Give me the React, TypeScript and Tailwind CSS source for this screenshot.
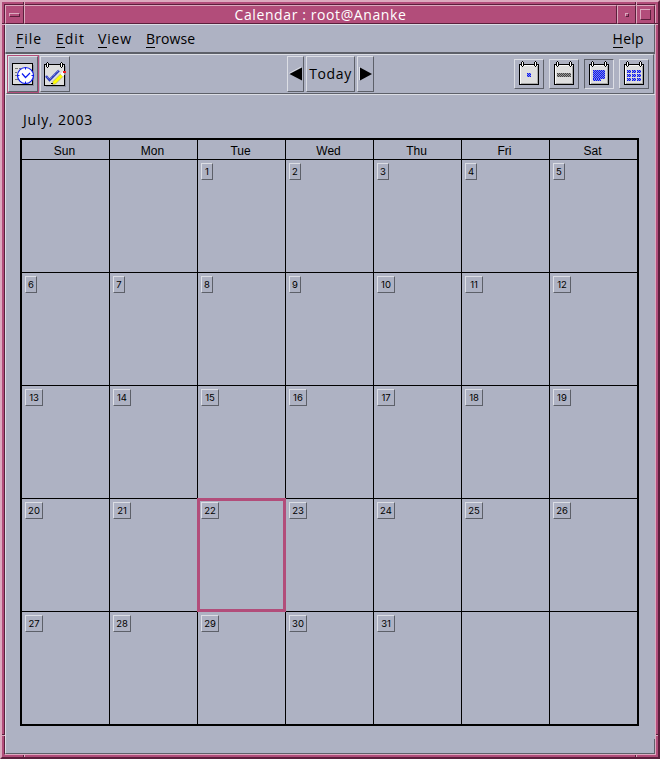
import type { ReactNode } from "react";

const UI = "font-['Open_Sans','Noto_Sans',sans-serif]";
const RAISED = "border border-t-[#dcdee5] border-l-[#dcdee5] border-r-[#5d6069] border-b-[#5d6069]";
const SUNKEN = "border border-t-[#5d6069] border-l-[#5d6069] border-r-[#dcdee5] border-b-[#dcdee5]";
const TITLE = "border border-t-[#dcaabf] border-l-[#dcaabf] border-r-[#5b1f3c] border-b-[#5b1f3c] bg-[#b24d7a]";

function MenuItem({ label, className }: { label: string; className: string }) {
  return (
    <div className={`flex h-[21px] text-[14px] leading-[19px] whitespace-pre text-black ${className}`}>
      <span className="h-[19px] border-b border-black">{label[0]}</span>
      <span>{label.slice(1)}</span>
    </div>
  );
}

function Rings({ xs }: { xs: number[] }) {
  return (
    <>
      {xs.map((x) => (
        <g key={x}>
          <rect x={x} y="3" width="3" height="4" fill="#000" />
          <rect x={x + 1} y="2" width="1" height="6" fill="#000" />
          <rect x={x + 1} y="3" width="1" height="4" fill="#fff" />
        </g>
      ))}
    </>
  );
}

function Pad({ children }: { children: ReactNode }) {
  return (
    <svg width="28" height="28" viewBox="1 1 28 28" shapeRendering="crispEdges">
      <rect x="5" y="5" width="20" height="21" fill="#000" />
      <rect x="6" y="6" width="18" height="19" fill="#f8f8f8" />
      <rect x="7" y="7" width="17" height="18" fill="#a8a8a8" />
      <rect x="7" y="7" width="16" height="17" fill="#dedede" />
      <Rings xs={[7, 20]} />
      {children}
    </svg>
  );
}

function Dither({ x, y, w, h, fill = "#0a18f0" }: { x: number; y: number; w: number; h: number; fill?: string }) {
  let d = "";
  for (let j = 0; j < h; j++)
    for (let i = 0; i < w; i++) if ((i + j) % 2 === 0) d += `M${x + i} ${y + j}h1v1h-1z`;
  return (
    <>
      <rect x={x} y={y} width={w} height={h} fill={fill} opacity="0.45" />
      <path d={d} fill={fill} />
    </>
  );
}

function ViewButton({ active, children }: { active?: boolean; children: ReactNode }) {
  return <div className={`h-[30px] w-[30px] ${active ? `${SUNKEN} bg-[#a6aabc]` : RAISED}`}><Pad>{children}</Pad></div>;
}

function AppointmentIcon() {
  return (
    <svg width="28" height="34" viewBox="9 57 28 34">
      <g shapeRendering="crispEdges">
        <rect x="14" y="65" width="20" height="21" fill="#8f93a2" />
        <rect x="12" y="63" width="21" height="22" fill="#000" />
        <rect x="13" y="64" width="19" height="20" fill="#dedede" />
        <path d="M15 68h3M19 68h2M15 72h2M15 75h2M15 79h3" stroke="#777" transform="translate(0 .5)" />
      </g>
      <circle cx="25.5" cy="75.5" r="8" fill="#fff" stroke="#0a18f0" strokeWidth="1.2" />
      <path d="M25.5 68v1.5M25.5 81.500v1.500M18 75.500h1.500M31.500 75.500h1.500" stroke="#0a18f0" />
      <path d="M22 73.500l3.500 4 4.500-4.500" fill="none" stroke="#0a18f0" strokeWidth="1.200" />
    </svg>
  );
}

function TodoIcon() {
  return (
    <svg width="28" height="34" viewBox="41 57 28 34">
      <g shapeRendering="crispEdges">
        <rect x="46" y="66" width="20" height="21" fill="#8f93a2" />
        <rect x="44" y="64" width="21" height="22" fill="#000" />
        <rect x="45" y="65" width="19" height="20" fill="#dedede" />
        <g transform="translate(39 60)"><Rings xs={[7, 21]} /></g>
      </g>
      <path d="M46 76l3.500 4 9.500-9.500" fill="none" stroke="#2a38c0" strokeWidth="2.400" />
      <path d="M46 75.500l3.500 4 9.500-9.500" fill="none" stroke="#a6acd8" strokeWidth="1" strokeDasharray="1 1" />
      <path d="M53 81.500l7.500-7.500 2.500 2.500-7.500 7.500-3 .5z" fill="#ffff00" stroke="#888" strokeWidth=".5" />
      <path d="M60.500 74l2-2.500 2.500 2.500-2 2.500z" fill="#fff" />
      <rect x="63" y="71" width="3" height="2" fill="#f02020" />
      <rect x="51" y="83" width="2" height="1" fill="#000" />
    </svg>
  );
}

function Arrow({ right }: { right?: boolean }) {
  return (
    <svg width="15" height="34" viewBox="0 0 15 34">
      {right ? (
        <>
          <path d="M1.500 10v13" stroke="#dcdee5" />
          <path d="M2 10.500v13l12-6.500z" fill="#000" />
        </>
      ) : (
        <>
          <path d="M1 16.500l12-6.500" stroke="#dcdee5" />
          <path d="M14 10.500v13l-12.500-6.500z" fill="#000" />
        </>
      )}
    </svg>
  );
}

const DAYS = ["Sun", "Mon", "Tue", "Wed", "Thu", "Fri", "Sat"];

function DayCell({ index }: { index: number }) {
  const day = index - 1;
  const valid = day >= 1 && day <= 31;
  return (
    <div className="relative flex items-start bg-[#aeb2c3] p-[3px]">
      {valid && (
        <span
          className={`flex h-[17px] items-center justify-center font-['Inter','Liberation_Sans',sans-serif] text-[9.5px] leading-[15px] text-black ${RAISED} ${day < 10 ? "w-[12px]" : "w-[18px]"}`}
        >
          {day}
        </span>
      )}
      {day === 22 && <div className="absolute -top-px -right-px -bottom-px -left-px border-3 border-[#b24d7a]" />}
    </div>
  );
}

export default function App() {
  return (
    <div className={`relative h-[759px] w-[660px] overflow-hidden border-2 border-t-[#dcaabf] border-l-[#dcaabf] border-r-[#5b1f3c] border-b-[#5b1f3c] bg-[#b24d7a] p-[2px] ${UI}`}>
      <div className="flex h-full flex-col border border-t-[#5b1f3c] border-l-[#5b1f3c] border-r-[#dcaabf] border-b-[#dcaabf] bg-[#aeb2c3]">
        <header className="flex h-[19px] shrink-0">
          <div className={`flex w-[19px] items-center justify-center ${TITLE}`}>
            <div className="h-[4px] w-[11px] border border-t-[#dcaabf] border-l-[#dcaabf] border-r-[#5b1f3c] border-b-[#5b1f3c]" />
          </div>
          <div className={`flex flex-1 justify-center text-[14px] leading-[17px] whitespace-pre text-white ${TITLE}`}>
            <span className="tracking-[0.6px]">Calendar : root@Ananke</span>
          </div>
          <div className={`flex w-[19px] items-center justify-center ${TITLE}`}>
            <div className="h-[4px] w-[4px] border border-t-[#dcaabf] border-l-[#dcaabf] border-r-[#5b1f3c] border-b-[#5b1f3c]" />
          </div>
          <div className={`flex w-[19px] items-center justify-center ${TITLE}`}>
            <div className="h-[11px] w-[11px] border border-t-[#dcaabf] border-l-[#dcaabf] border-r-[#5b1f3c] border-b-[#5b1f3c]" />
          </div>
        </header>

        <nav className={`flex h-[29px] shrink-0 pt-[4px] pr-[10px] pl-[10px] ${RAISED}`}>
          <MenuItem label="File" className="w-[40px] tracking-[1px]" />
          <MenuItem label="Edit" className="w-[42px] tracking-[1px]" />
          <MenuItem label="View" className="w-[48px] tracking-[0.8px]" />
          <MenuItem label="Browse" className="tracking-[0.1px]" />
          <MenuItem label="Help" className="ml-auto tracking-[0.3px]" />
        </nav>

        <div className="h-[41px] shrink-0 border-t border-l border-t-[#5d6069] border-l-[#dcdee5] pr-px">
          <div className={`flex h-[40px] justify-between pr-[4px] ${RAISED}`}>
            <div className="flex w-[280px]">
              <div className="h-[38px] w-[32px] border border-[#b24d7a]">
                <div className={`h-[36px] w-[30px] ${RAISED}`}><AppointmentIcon /></div>
              </div>
              <div className={`mt-px ml-px h-[36px] w-[30px] ${RAISED}`}><TodoIcon /></div>
            </div>
            <div className="mt-px mr-auto flex h-[36px] gap-[2px]">
              <div className={`w-[17px] ${RAISED}`}><Arrow /></div>
              <div className={`flex w-[49px] justify-center text-[14px] leading-[34px] tracking-[0.6px] text-black ${RAISED}`}>Today</div>
              <div className={`w-[17px] ${RAISED}`}><Arrow right /></div>
            </div>
            <div className="mt-[4px] flex h-[30px] gap-[5px]">
              <ViewButton><Dither x={13} y={14} w={4} h={4} /></ViewButton>
              <ViewButton><Dither x={8} y={14} w={14} h={4} fill="#444" /></ViewButton>
              <ViewButton active>
                <Dither x={9} y={11} w={12} h={9} />
                <Dither x={9} y={20} w={8} h={2} />
              </ViewButton>
              <ViewButton>
                {[8, 13, 18].map((x) => [11, 15, 19].map((y) => <Dither key={`${x}-${y}`} x={x} y={y} w={4} h={3} />))}
              </ViewButton>
            </div>
          </div>
        </div>

        <main className="relative flex-1 border-t border-b border-l border-t-[#dcdee5] border-b-[#5d6069] border-l-[#dcdee5] pl-[14px]">
          <div className="h-[43px] pt-[15px] pl-[3px] text-[14px] leading-[19px] tracking-[0.8px] text-black">July, 2003</div>
          <div className="w-[619px] border-2 border-black bg-black">
            <div className="grid h-[19px] grid-cols-7 gap-px">
              {DAYS.map((d) => (
                <div key={d} className="bg-[#aeb2c3] pt-[4px] pr-[2px] text-center font-['Liberation_Sans',Arial,sans-serif] text-[12px] leading-[15px] text-black">
                  {d}
                </div>
              ))}
            </div>
            <div className="mt-px grid h-[564px] grid-cols-7 grid-rows-5 gap-px">
              {Array.from({ length: 35 }, (_, i) => (
                <DayCell key={i} index={i} />
              ))}
            </div>
          </div>
          <div className="absolute right-0 bottom-0 h-[14px] w-px bg-[#5d6069]" />
        </main>
      </div>

      {/* Notches that mark the resize corners of the window frame */}
      {["left-[21px] -top-px", "left-[633px] -top-px", "left-[21px] top-[753px]", "left-[633px] top-[753px]"].map((p) => (
        <div key={p} className={`absolute h-[4px] w-[2px] border-r border-l border-r-[#dcaabf] border-l-[#5b1f3c] ${p}`} />
      ))}
      {["top-[21px] -left-px", "top-[21px] left-[653px]", "top-[732px] -left-px", "top-[732px] left-[654px]"].map((p) => (
        <div key={p} className={`absolute h-[2px] w-[4px] border-t border-b border-t-[#5b1f3c] border-b-[#dcaabf] ${p}`} />
      ))}
    </div>
  );
}
